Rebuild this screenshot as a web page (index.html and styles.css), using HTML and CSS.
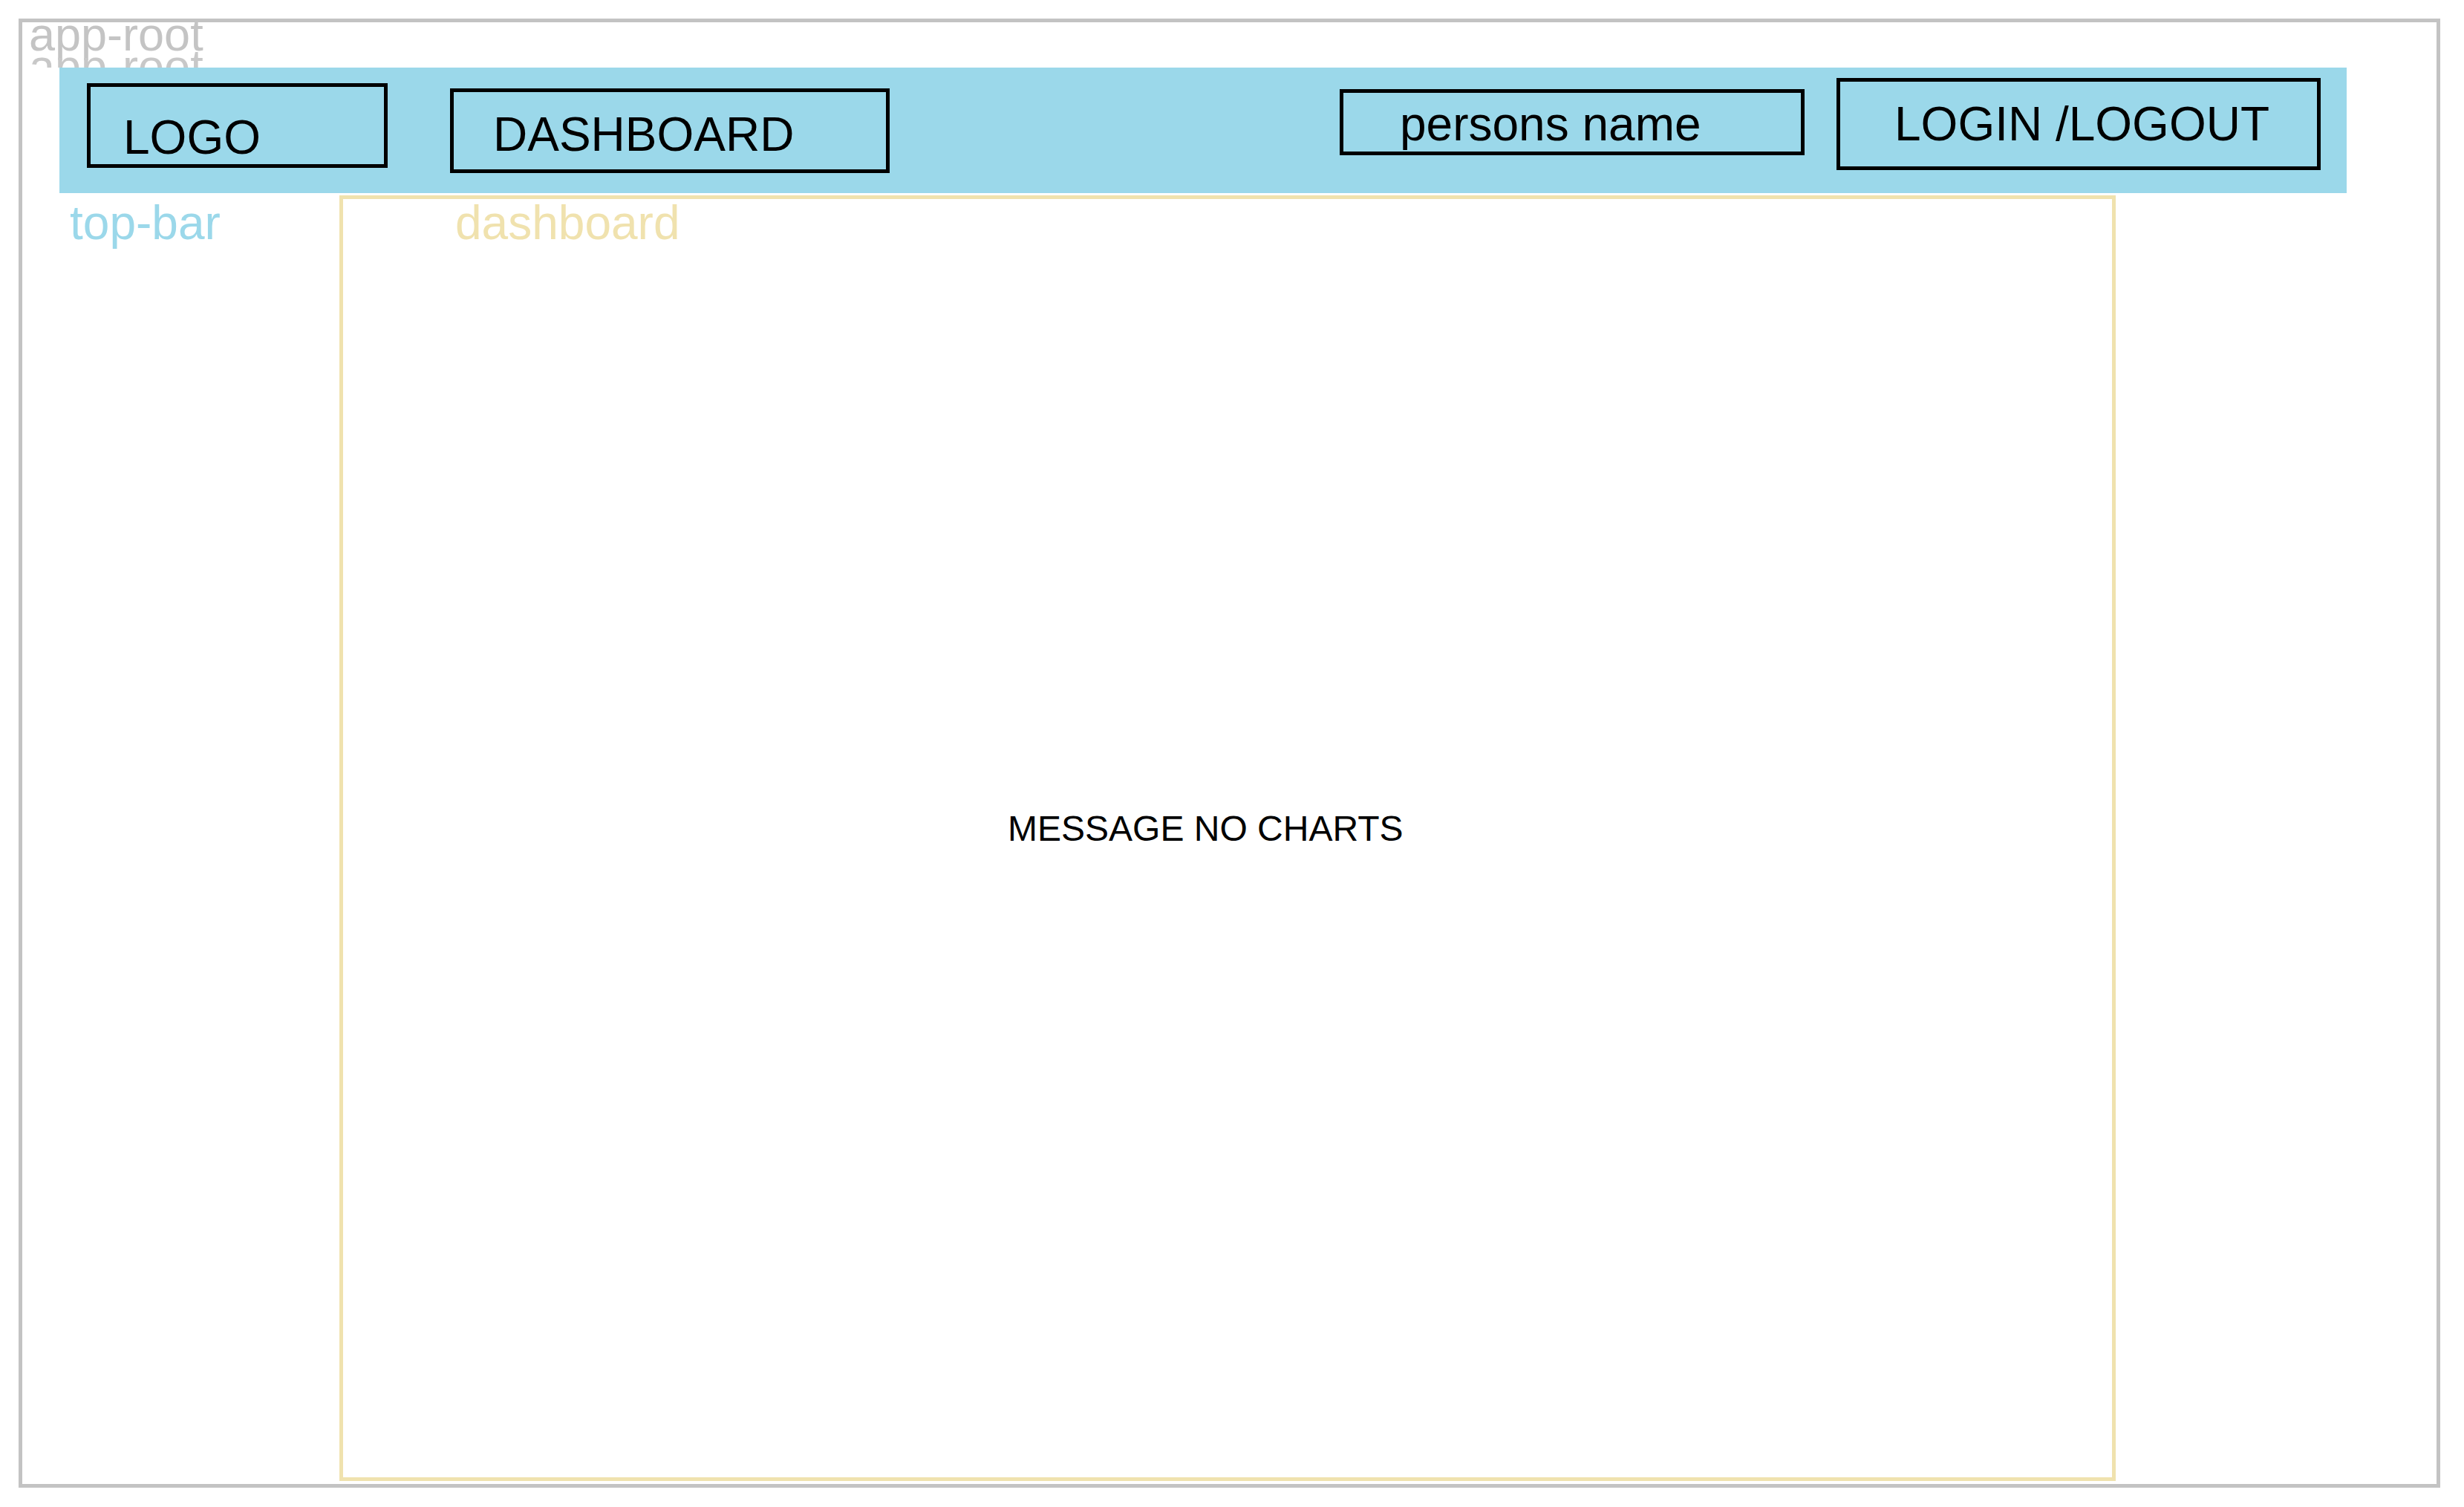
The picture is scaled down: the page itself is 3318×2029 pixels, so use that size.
FILE: index.html
```html
<!DOCTYPE html>
<html>
<head>
<meta charset="utf-8">
<title>app-root</title>
<link rel="stylesheet" href="styles.css">
</head>
<body>
<div class="app-root">
  <div class="app-label">app-root</div>
  <header class="top-bar">
    <div class="tb-box logo">LOGO</div>
    <div class="tb-box nav">DASHBOARD</div>
    <div class="tb-box person">persons name</div>
    <div class="tb-box login">LOGIN /LOGOUT</div>
  </header>
  <div class="main-row">
    <div class="topbar-label">top-bar</div>
    <section class="dashboard">
      <div class="dashboard-label">dashboard</div>
      <div class="message">MESSAGE NO CHARTS</div>
    </section>
  </div>
</div>
</body>
</html>
```

FILE: styles.css
```css
html, body {
  margin: 0;
  padding: 0;
  background: #ffffff;
}

body {
  font-family: "Liberation Sans", Arial, sans-serif;
}

.app-root {
  box-sizing: border-box;
  margin: 25px 0 0 25px;
  width: 3261px;
  height: 1978px;
  border: 5px solid #c3c3c3;
}

.app-label {
  position: relative;
  height: 61px;
  padding-left: 9px;
  font-size: 63px;
  line-height: 32px;
  color: #c4c4c4;
}

.app-label::after {
  content: "app-root";
  position: absolute;
  left: 9px;
  top: 0;
  box-sizing: border-box;
  height: 61px;
  padding-top: 43px;
  overflow: hidden;
  color: #c8c8c8;
}

.top-bar {
  box-sizing: border-box;
  margin-left: 50px;
  width: 3080px;
  height: 169px;
  background: #9bd8ea;
  display: flex;
  align-items: flex-start;
}

.tb-box {
  box-sizing: border-box;
  border: 5px solid #000000;
  font-size: 64px;
  line-height: 64px;
  color: #000000;
  white-space: nowrap;
}

.logo {
  margin-top: 21px;
  margin-left: 37px;
  width: 405px;
  height: 114px;
  padding: 36px 0 0 44px;
}

.nav {
  margin-top: 28px;
  margin-left: 84px;
  width: 592px;
  height: 114px;
  padding: 25px 0 0 53px;
}

.person {
  margin-top: 29px;
  margin-left: 606px;
  width: 626px;
  height: 89px;
  padding: 10px 0 0 76px;
}

.login {
  margin-top: 14px;
  margin-left: 43px;
  width: 652px;
  height: 124px;
  padding: 25px 0 0 73px;
}

.main-row {
  margin-top: 3px;
  display: flex;
  align-items: flex-start;
}

.topbar-label {
  box-sizing: border-box;
  width: 427px;
  padding: 5px 0 0 64px;
  font-size: 64px;
  line-height: 64px;
  color: #9bd8ea;
}

.dashboard {
  box-sizing: border-box;
  width: 2392px;
  height: 1731px;
  border: 5px solid #f0e2ae;
  display: flex;
  flex-direction: column;
}

.dashboard-label {
  padding: 0 0 0 151px;
  font-size: 64px;
  line-height: 64px;
  color: #f0e2ae;
}

.message {
  margin-top: 760px;
  padding-left: 895px;
  font-size: 48px;
  line-height: 48px;
  color: #000000;
  white-space: nowrap;
}
```
